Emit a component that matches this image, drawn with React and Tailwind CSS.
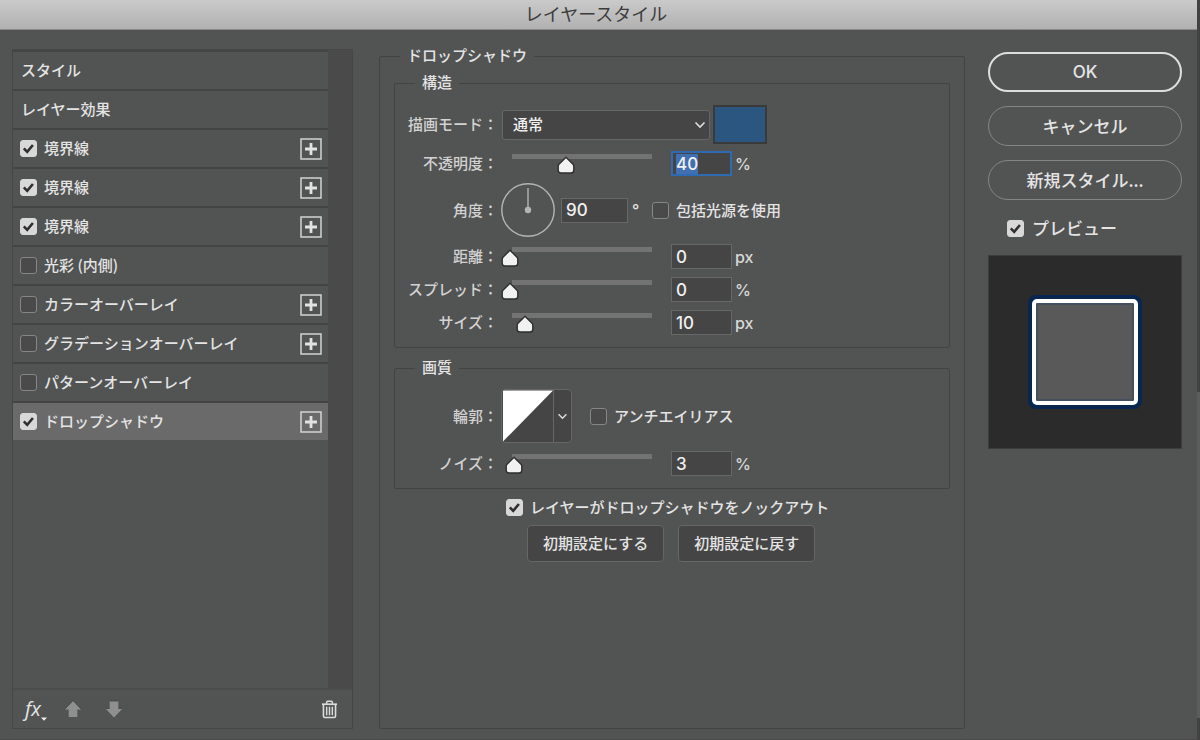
import { useEffect, useRef, useState } from "react";

const EFFECTS = [
  { name: "境界線", on: true, add: true },
  { name: "境界線", on: true, add: true },
  { name: "境界線", on: true, add: true },
  { name: "光彩 (内側)", on: false, add: false },
  { name: "カラーオーバーレイ", on: false, add: true },
  { name: "グラデーションオーバーレイ", on: false, add: true },
  { name: "パターンオーバーレイ", on: false, add: false },
  { name: "ドロップシャドウ", on: true, add: true, active: true },
];

function Checkbox({ id, label, defaultChecked = false, className = "gap-[7px]" }) {
  return (
    <span className={`flex items-center ${className}`}>
      <span className="grid shrink-0 place-items-center">
        <input
          id={id}
          type="checkbox"
          defaultChecked={defaultChecked}
          className="peer col-start-1 row-start-1 size-[17px] appearance-none rounded-[3px] border border-[#868686] bg-[#4a4a4a] checked:border-[#d8d8d8] checked:bg-[#d8d8d8]"
        />
        <svg
          viewBox="0 0 17 17"
          className="pointer-events-none invisible col-start-1 row-start-1 size-[17px] peer-checked:visible"
          aria-hidden="true"
        >
          <path d="M3.8 8.4 7.2 11.8 12.9 5" fill="none" stroke="#2f2f2f" strokeWidth="2.6" />
        </svg>
      </span>
      <label htmlFor={id}>{label}</label>
    </span>
  );
}

function Group({ title, legendClass = "ml-5", className = "", children }) {
  return (
    <fieldset className={`min-w-0 rounded-[2px] border border-[#434343] ${className}`}>
      <legend className={`h-4 px-[7px] leading-[14px] ${legendClass}`}>{title}</legend>
      {children}
    </fieldset>
  );
}

function RowLabel({ htmlFor, children }) {
  return (
    <label htmlFor={htmlFor} className="w-[103px] shrink-0 text-right text-[#d2d2d2]">
      {children}：
    </label>
  );
}

function SliderRow({ id, label, initial, max, unit, curve = 1, focused = false, className = "h-[33px]" }) {
  const [value, setValue] = useState(initial);
  const field = useRef(null);
  useEffect(() => {
    if (focused) {
      field.current.focus();
      field.current.select();
    }
  }, [focused]);
  const share = Math.pow(Math.min(Number(value) || 0, max) / max, curve);
  return (
    <div className={`flex items-center ${className}`}>
      <RowLabel htmlFor={id}>{label}</RowLabel>
      <div className="relative ml-[14px] h-5 w-[140px]">
        <div className="h-[5px] bg-[#737373]" />
        <svg
          viewBox="0 0 18 18"
          className="absolute top-[2px] -ml-[11px] size-[18px]"
          style={{ left: `${share * 100}%` }}
          aria-hidden="true"
        >
          <path
            d="M9 1.2 16 8.2Q16.8 9 16.8 10V14.2Q16.8 17 14 17H4Q1.2 17 1.2 14.2V10Q1.2 9 2 8.2Z"
            fill="#f1f1f1"
            stroke="#2e2e2e"
            strokeWidth="1.4"
            strokeLinejoin="round"
          />
        </svg>
        <input
          type="range"
          aria-label={label}
          min="0"
          max={max}
          value={value}
          onChange={(e) => setValue(e.target.value)}
          className="absolute inset-0 w-full opacity-0"
        />
      </div>
      <input
        ref={field}
        id={id}
        type="text"
        value={value}
        onChange={(e) => setValue(e.target.value)}
        className="ml-[19px] h-[25px] w-[61px] border border-[#686868] bg-[#454545] px-1 font-[Inter,sans-serif] text-[17px] leading-[21px] text-[#f0f0f0] outline-none selection:bg-[#426fb0] selection:text-[#f0f0f0] focus:border-2 focus:border-[#2f6bb3] focus:px-[3px]"
      />
      <span className="ml-[3px] font-[Inter,sans-serif] text-base text-[#d8d8d8]">{unit}</span>
    </div>
  );
}

function Chevron({ className }) {
  return (
    <svg viewBox="0 0 12 8" className={className} aria-hidden="true">
      <path d="M1.5 1.5 6 6 10.5 1.5" fill="none" stroke="#dedede" strokeWidth="1.6" />
    </svg>
  );
}

function EffectList() {
  return (
    <aside className="flex w-[341px] shrink-0 flex-col self-stretch border border-[#464646]">
      <div className="flex grow">
        <ul className="grow">
          <li className="flex h-[39px] items-center border-t-2 border-[#444444] pl-2">スタイル</li>
          <li className="flex h-[39px] items-center border-t-2 border-[#444444] pl-2">レイヤー効果</li>
          {EFFECTS.map((effect, i) => (
            <li
              key={i}
              className={`flex h-[39px] items-center justify-between border-t-2 border-[#444444] pr-[6px] pl-[7px] ${
                effect.active ? "bg-[#6a6a6a]" : ""
              }`}
            >
              <Checkbox id={`effect-${i}`} label={effect.name} defaultChecked={effect.on} />
              {effect.add && (
                <button type="button" aria-label={`${effect.name}を追加`}>
                  <svg viewBox="0 0 22 22" className="size-[22px]" aria-hidden="true">
                    <rect x="1" y="1" width="20" height="20" fill="none" stroke="#d4d4d4" strokeWidth="1.5" />
                    <path d="M11 5v12M5 11h12" stroke="#e2e2e2" strokeWidth="2.8" />
                  </svg>
                </button>
              )}
            </li>
          ))}
        </ul>
        <div className="w-6 bg-[#4a4a4a]" />
      </div>
      <div className="flex h-10 items-center border-t-2 border-[#4c4c4c] pr-[14px] pl-3">
        <button type="button" className="flex items-end" aria-label="レイヤースタイルを追加">
          <span className="font-['Open_Sans'] text-xl leading-6 font-normal italic">fx</span>
          <svg viewBox="0 0 6 4" className="h-1 w-[6px]" aria-hidden="true">
            <path d="M0 .5h6L3 3.8Z" fill="#f0f0f0" />
          </svg>
        </button>
        <button type="button" className="ml-[17px]" aria-label="上へ移動">
          <svg viewBox="0 0 18 18" className="size-[18px]" aria-hidden="true">
            <path d="M9 .6 17.6 9.6H13.3V17H4.7V9.6H.4Z" fill="#8f8f8f" />
            <path d="M.4 9.6 9 .6 17.6 9.6" fill="none" stroke="#404040" strokeWidth=".8" />
          </svg>
        </button>
        <button type="button" className="ml-[23px]" aria-label="下へ移動">
          <svg viewBox="0 0 18 18" className="size-[18px]" aria-hidden="true">
            <path d="M9 17.4 17.6 8.4H13.3V1H4.7V8.4H.4Z" fill="#8f8f8f" />
            <path d="M4.7 1h8.6M.4 8.4h4.3M13.3 8.4h4.3" stroke="#404040" strokeWidth=".8" />
          </svg>
        </button>
        <button type="button" className="ml-auto" aria-label="削除">
          <svg viewBox="0 0 18 20" className="h-[19px] w-[17px]" fill="none" stroke="#dcdcdc" aria-hidden="true">
            <path d="M1 4.4h16" strokeWidth="1.8" />
            <path d="M6 4V2.2Q6 1.2 7 1.2h4q1 0 1 1V4" strokeWidth="1.6" />
            <path d="M2.6 4.8V17q0 1.5 1.5 1.5h9.8q1.5 0 1.5-1.5V4.8" strokeWidth="1.7" />
            <path d="M6 7v9M9 7v9M12 7v9" strokeWidth="1.5" />
          </svg>
        </button>
      </div>
    </aside>
  );
}

export default function App() {
  return (
    <div className="flex min-h-screen bg-[#424242] font-['Noto_Sans_CJK_JP',Inter,sans-serif] text-[15px] font-medium text-[#e4e4e4]">
      <div className="flex grow flex-col border-b border-[#494949] bg-[#525353]">
        <header className="flex h-[30px] items-center justify-center border-b border-[#8a8a8a] bg-linear-to-b from-[#cacaca] to-[#b1b1b1] pr-[5px] pb-[3px]">
          <h1 className="text-lg leading-6 font-normal text-[#3c3c3c]">レイヤースタイル</h1>
        </header>
        <main className="flex grow pr-[15px] pb-[10px] pl-3">
          <div className="flex pt-[19px]">
            <EffectList />
          </div>

          <div className="ml-[26px] flex min-w-0 grow pt-[18px]">
            <Group title="ドロップシャドウ" legendClass="ml-[6px]" className="grow px-[14px]">
              <Group title="構造" className="mt-[11px] pt-[14px] pb-2">
                <div className="flex h-[39px] items-center">
                  <RowLabel htmlFor="blend">描画モード</RowLabel>
                  <div className="ml-1 grid items-center">
                    <select
                      id="blend"
                      defaultValue="通常"
                      className="col-start-1 row-start-1 h-[30px] w-[208px] appearance-none rounded-[3px] border border-[#666666] bg-[#454545] pl-[10px] text-[#f0f0f0]"
                    >
                      <option>通常</option>
                    </select>
                    <Chevron className="pointer-events-none col-start-1 row-start-1 mr-1 h-2 w-3 justify-self-end" />
                  </div>
                  <button
                    type="button"
                    aria-label="シャドウのカラー"
                    className="ml-[3px] h-[39px] w-[54px] border-2 border-[#3a3a3a] bg-[#2b567f]"
                  />
                </div>
                <SliderRow id="opacity" label="不透明度" initial="40" max={100} unit="%" focused className="h-[39px]" />
                <div className="mb-[3px] flex h-[54px] items-center">
                  <RowLabel htmlFor="angle">角度</RowLabel>
                  <svg viewBox="0 0 54 54" className="ml-[3px] size-[54px]" aria-hidden="true">
                    <circle cx="27" cy="27" r="26.2" fill="none" stroke="#b4b4b4" strokeWidth="1.4" />
                    <path d="M27 5v22" stroke="#b4b4b4" strokeWidth="1.4" />
                    <circle cx="27" cy="27" r="3.2" fill="#b4b4b4" />
                  </svg>
                  <input
                    id="angle"
                    type="text"
                    defaultValue="90"
                    className="ml-[6px] h-[25px] w-[67px] border border-[#686868] bg-[#454545] px-1 font-[Inter,sans-serif] text-[17px] leading-[21px] text-[#f0f0f0] outline-none"
                  />
                  <span className="ml-1 w-5 font-[Inter,sans-serif] text-base">°</span>
                  <Checkbox id="global-light" label="包括光源を使用" />
                </div>
                <SliderRow id="distance" label="距離" initial="0" max={30000} unit="px" />
                <SliderRow id="spread" label="スプレッド" initial="0" max={100} unit="%" />
                <SliderRow id="size" label="サイズ" initial="10" max={250} curve={0.7} unit="px" />
              </Group>

              <Group title="画質" className="mt-[12px] pt-[13px] pb-2">
                <div className="mb-1 flex h-[54px] items-center">
                  <RowLabel htmlFor="contour">輪郭</RowLabel>
                  <button
                    id="contour"
                    type="button"
                    className="ml-[3px] flex h-[54px] items-center overflow-hidden rounded-[4px] border border-[#666666] bg-[#454545]"
                  >
                    <svg viewBox="0 0 52 52" className="size-[52px] border-r border-[#666666]" aria-hidden="true">
                      <path d="M1 0h51L1 52Z" fill="#ffffff" />
                    </svg>
                    <Chevron className="mx-[3px] h-[7px] w-[11px]" />
                  </button>
                  <Checkbox id="antialias" label="アンチエイリアス" className="ml-[18px] gap-[7px]" />
                </div>
                <SliderRow id="noise" label="ノイズ" initial="3" max={100} unit="%" />
              </Group>

              <div className="pt-[7px] pl-[112px]">
                <Checkbox id="knockout" label="レイヤーがドロップシャドウをノックアウト" defaultChecked />
                <div className="mt-[6px] flex gap-[14px] pl-[21px]">
                  <button type="button" className="h-[37px] rounded-[4px] border border-[#666666] bg-[#454545] px-[15px]">
                    初期設定にする
                  </button>
                  <button type="button" className="h-[37px] rounded-[4px] border border-[#666666] bg-[#454545] px-[15px]">
                    初期設定に戻す
                  </button>
                </div>
              </div>
            </Group>
          </div>

          <div className="ml-[23px] w-[194px] shrink-0 pt-[22px] text-[17px] leading-6">
            <div className="flex flex-col gap-[14px]">
              <button type="button" className="h-10 rounded-full border-2 border-[#dedede] font-[Inter,sans-serif]">
                OK
              </button>
              <button type="button" className="h-10 rounded-full border border-[#858585]">
                キャンセル
              </button>
              <button type="button" className="h-10 rounded-full border border-[#858585]">
                新規スタイル...
              </button>
            </div>
            <Checkbox id="preview" label="プレビュー" defaultChecked className="mt-4 ml-[19px] gap-2" />
            <div className="mt-[15px] grid aspect-square place-items-center border border-[#3d3d3d] bg-[#2b2b2b]">
              <div className="size-[114px] rounded-[8px] bg-[#08264f] p-1">
                <div className="size-full rounded-[5px] border-4 border-white bg-[#595959] inset-ring-2 inset-ring-[#45505f]" />
              </div>
            </div>
          </div>
        </main>
      </div>
      <div className="flex w-[3px] shrink-0 flex-col" aria-hidden="true">
        <div className="h-[53%]" />
        <div className="h-[44%] bg-[#5c5c5c]" />
      </div>
    </div>
  );
}
